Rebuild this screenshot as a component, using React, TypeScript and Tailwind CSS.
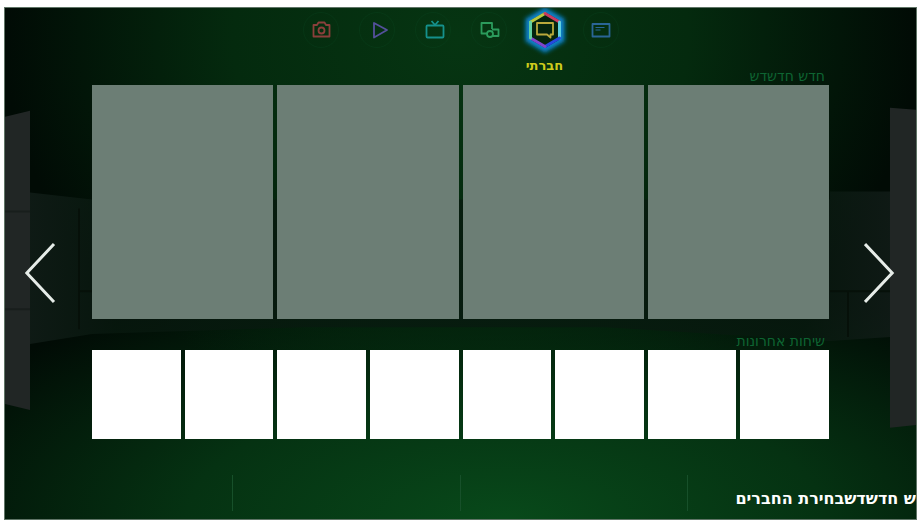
import { useState } from 'react';
import type { ReactNode } from 'react';

interface Tab {
  id: string;
  label: string;
  color: string;
  icon: ReactNode;
}

const tabs: Tab[] = [
  {
    id: 'photos',
    label: 'תמונות',
    color: 'text-[#8a3f3b]',
    icon: (
      <>
        <path d="M2.500 5H6l1.500-2.500h6L15 5h3.500v11.500h-16z" />
        <circle cx="10.500" cy="10.500" r="3" />
      </>
    ),
  },
  {
    id: 'video',
    label: 'וידאו',
    color: 'text-[#54509c]',
    icon: <path d="M7 3v14.500L20 10z" />,
  },
  {
    id: 'tv',
    label: 'טלוויזיה',
    color: 'text-[#15918c]',
    icon: (
      <>
        <rect x="3.500" y="5.500" width="17" height="12" rx="1" />
        <path d="M8.500 1L12 5l3.500-4" />
      </>
    ),
  },
  {
    id: 'apps',
    label: 'יישומים',
    color: 'text-[#2b9b5c]',
    icon: (
      <>
        <path d="M8 13.500H2.500V3h10.500v6" />
        <path d="M13 9.500h6.500V16H14" />
        <circle cx="11" cy="14" r="3" />
      </>
    ),
  },
  {
    id: 'social',
    label: 'חברתי',
    color: 'text-[#b9a93c]',
    icon: <path d="M2 3h16v11.500h-2.500v3L12 14.500H2z" />,
  },
  {
    id: 'news',
    label: 'חדשות',
    color: 'text-[#2a6596]',
    icon: (
      <>
        <rect x="1.500" y="4" width="17" height="12.500" />
        <path d="M4.500 7.500h9M4.500 10h5" strokeWidth="1.200" />
      </>
    ),
  },
];

const featured = [1, 2, 3, 4];
const chats = [1, 2, 3, 4, 5, 6, 7, 8];

function Room() {
  return (
    <svg className="absolute inset-0 h-full w-full" viewBox="0 0 911 512" preserveAspectRatio="none" aria-hidden="true">
      <defs>
        <linearGradient id="back" x1="0" x2="1">
          <stop offset="0" stopColor="#131f1a" />
          <stop offset="0.1" stopColor="#08190f" />
          <stop offset="0.9" stopColor="#08190f" />
          <stop offset="1" stopColor="#131e1a" />
        </linearGradient>
      </defs>
      <path d="M25 185L87 192H825V184H885V330L825 334L600 320H300L87 327L25 337Z" fill="url(#back)" opacity="0.75" />
      <path d="M74 201V322M75 284H88M825 284H885M843 284V330" stroke="#061009" strokeWidth="2" />
      <path d="M0 109L25 103V403L0 397Z" fill="#212625" />
      <path d="M0 204H25M0 302H25" stroke="#181e1c" strokeWidth="2" />
      <path d="M885 100L911 102V418L885 421Z" fill="#212625" />
    </svg>
  );
}

function HexRing() {
  return (
    <svg className="absolute h-12 w-12 overflow-visible" viewBox="0 0 48 48" fill="none" aria-hidden="true">
      <defs>
        <filter id="glow" x="-40%" y="-40%" width="180%" height="180%">
          <feGaussianBlur stdDeviation="2" />
        </filter>
      </defs>
      <path d="M24 6L39.500 15V33L24 42L8.500 33V15Z" stroke="#0a84d0" strokeWidth="8" filter="url(#glow)" />
      <path d="M24 6L39.500 15V33L24 42L8.500 33V15Z" fill="#04250f" />
      <g strokeWidth="3" strokeLinecap="round">
        <path d="M24 7.500L9.500 16" stroke="#b8c840" />
        <path d="M24 7.500L38.500 16" stroke="#c93a62" />
        <path d="M38.500 16V32" stroke="#5fd0e0" />
        <path d="M38.500 32L24 40.500" stroke="#2748e0" />
        <path d="M24 40.500L9.500 32" stroke="#7f46cc" />
        <path d="M9.500 32V16" stroke="#62d0a0" />
      </g>
    </svg>
  );
}

function TabBar({ active, onSelect }: { active: string; onSelect: (id: string) => void }) {
  return (
    <nav className="-mt-[2px] flex justify-center">
      {tabs.map((tab) => (
        <button
          key={tab.id}
          type="button"
          aria-label={tab.label}
          onClick={() => onSelect(tab.id)}
          className={`flex w-14 flex-col items-center ${tab.color}`}
        >
          <span className="relative flex h-12 w-12 items-center justify-center">
            {tab.id === active ? (
              <HexRing />
            ) : (
              <span className="absolute h-9 w-9 rounded-full border border-green-900/20" />
            )}
            <svg
              className="relative h-5 w-5 overflow-visible"
              viewBox="0 0 20 20"
              fill="none"
              stroke="currentColor"
              strokeWidth="1.800"
              strokeLinejoin="round"
            >
              {tab.icon}
            </svg>
          </span>
          {tab.id === active && (
            <span className="mt-1 text-[13px] leading-4 font-bold text-[#cfcb1c]">{tab.label}</span>
          )}
        </button>
      ))}
    </nav>
  );
}

function Arrow({ side, label }: { side: 'left' | 'right'; label: string }) {
  return (
    <button type="button" aria-label={label} className={side === 'left' ? 'justify-self-start pl-5' : 'justify-self-end pr-5'}>
      <svg className="h-16 w-8" viewBox="0 0 32 64" fill="none" stroke="#e6ece8" strokeWidth="3">
        <path d={side === 'left' ? 'M29 3L1.800 32L29 61' : 'M1 3L28.200 32L1 61'} />
      </svg>
    </button>
  );
}

function App() {
  const [active, setActive] = useState('social');

  return (
    <div className="bg-white pt-[7px] pr-[3px] pb-[2px] pl-1 font-['DejaVu_Sans','Liberation_Sans',sans-serif]">
      <main className="relative overflow-hidden border border-[#5f7466] bg-[#010b05]">
        <div className="absolute inset-0 bg-[radial-gradient(ellipse_50%_75%_at_50%_6%,#063512_0%,#042a0e_50%,transparent_100%),radial-gradient(ellipse_70%_50%_at_55%_100%,#08491a_0%,#053212_50%,transparent_100%)]" />
        <Room />

        <div className="relative">
          <TabBar active={active} onSelect={setActive} />

          <div className="grid grid-cols-[87px_1fr_87px] items-start">
            <div className="grid pt-[167px]">
              <Arrow side="left" label="הקודם" />
            </div>

            <div>
              <section>
                <h2 dir="rtl" className="-mt-[6px] px-1 text-sm leading-[17px] text-[#0e6432]">חדש חדשדש</h2>
                <div className="grid grid-cols-4 gap-1">
                  {featured.map((n) => (
                    <div key={n} className="h-[234px] bg-[#6c7e75]" />
                  ))}
                </div>
              </section>
              <section className="mt-[14px]">
                <h2 dir="rtl" className="px-1 text-sm leading-[17px] text-[#0e6432]">שיחות אחרונות</h2>
                <div className="grid grid-cols-8 gap-1">
                  {chats.map((n) => (
                    <div key={n} className="aspect-square bg-white" />
                  ))}
                </div>
              </section>
            </div>

            <div className="grid pt-[167px]">
              <Arrow side="right" label="הבא" />
            </div>
          </div>

          <footer className="mt-9 mb-2 grid h-9 grid-cols-4 items-end">
            <div className="h-full border-r border-[#17502a]" />
            <div className="h-full border-r border-[#17502a]" />
            <div className="h-full border-r border-[#17502a]" />
            <p dir="rtl" className="justify-self-end text-base font-bold whitespace-nowrap text-white">
              ש חדשדשבחירת החברים
            </p>
          </footer>
        </div>
      </main>
    </div>
  );
}

export default App;
